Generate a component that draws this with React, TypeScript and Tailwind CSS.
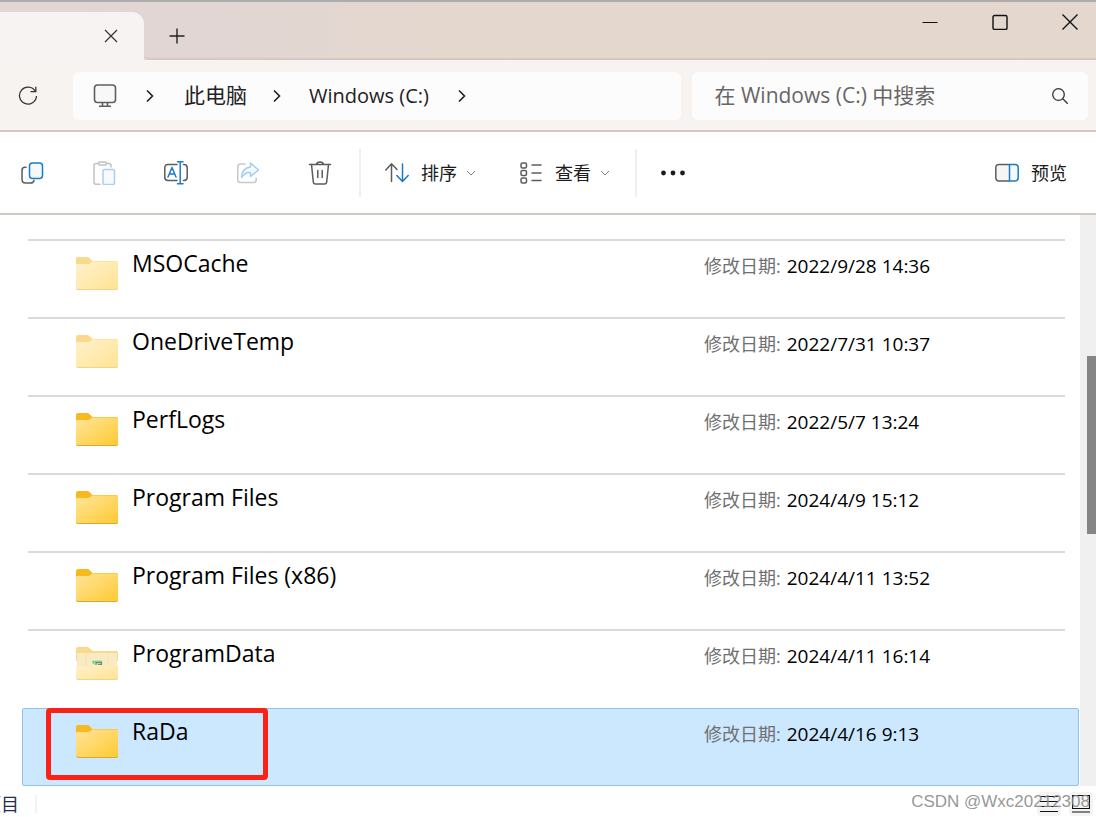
import type { ReactNode } from "react";
import { clsx } from "clsx";

type FolderKind = "hidden" | "normal" | "filled";

interface Entry {
    name: string;
    date: string;
    kind: FolderKind;
    selected?: boolean;
}

const entries: Entry[] = [
    { name: "MSOCache", date: "2022/9/28 14:36", kind: "hidden" },
    { name: "OneDriveTemp", date: "2022/7/31 10:37", kind: "hidden" },
    { name: "PerfLogs", date: "2022/5/7 13:24", kind: "normal" },
    { name: "Program Files", date: "2024/4/9 15:12", kind: "normal" },
    { name: "Program Files (x86)", date: "2024/4/11 13:52", kind: "normal" },
    { name: "ProgramData", date: "2024/4/11 16:14", kind: "filled" },
    { name: "RaDa", date: "2024/4/16 9:13", kind: "normal", selected: true },
];

const GRAY = "#5c5c5c";
const BLUE = "#1a7bc8";

const Folder = ({ kind }: { kind: FolderKind }) => {
    const pale = kind !== "normal";
    const id = `folder-${kind}`;
    return (
        <svg width="42" height="34" viewBox="0 0 42 34" className="shrink-0">
            <defs>
                <linearGradient id={id} x1="0" y1="0" x2="1" y2="1">
                    <stop offset="0" stopColor={pale ? "#fff1cc" : "#ffe59a"} />
                    <stop offset="1" stopColor={pale ? "#ffe394" : "#ffc930"} />
                </linearGradient>
            </defs>
            <path
                d="M0 2Q0 0 2 0H11Q12.500 0 13.500 1L16.500 4H40.500Q42 4 42 5.500V14H0Z"
                fill={pale ? "#fbd98c" : "#f7b91e"}
            />
            {kind === "filled" ? (
                <>
                    <path d="M1 6H41V20H1Z" fill="#f9eac4" />
                    <path d="M32 6V18M10 6V18" stroke="#f4e2b4" />
                    <path d="M17 13.500H26V19H17Z" fill="#d5e8c4" />
                    <path d="M16 14.500H26M17.500 14V17" fill="none" stroke="#7fd18a" strokeWidth="1.600" />
                    <path d="M20 18V15.700H25.500V18.500M22 17.500H25" fill="none" stroke="#6b8f6a" strokeWidth="1.200" />
                    <path
                        d="M0 20.500Q0 19.500 1.500 19.500H14L17 18H40.500Q42 18 42 19.500V31.500Q42 33 40.500 33H1.500Q0 33 0 31.500Z"
                        fill={`url(#${id})`}
                    />
                </>
            ) : (
                <path
                    d="M0 8.500Q0 7 1.500 7H12Q13.500 7 14.500 6L16 4.600H40.500Q42 4.600 42 6V31.500Q42 33 40.500 33H1.500Q0 33 0 31.500Z"
                    fill={`url(#${id})`}
                />
            )}
            <path
                d="M0.500 31.500Q1 32.500 2 32.500H40Q41 32.500 41.500 31.500"
                fill="none"
                stroke={pale ? "#efd48f" : "#dba63a"}
            />
        </svg>
    );
};

const Chevron = () => (
    <svg width="8" height="14" viewBox="0 0 8 14" fill="none" stroke="#1f1f1f" strokeWidth="1.600">
        <path d="M1 1.500L6.500 7L1 12.500" />
    </svg>
);

const SmallDown = () => (
    <svg width="10" height="6" viewBox="0 0 10 6" fill="none" stroke="#858585">
        <path d="M1 1L5 5L9 1" />
    </svg>
);

const Icon = ({ children }: { children: ReactNode }) => (
    <svg
        width="24"
        height="24"
        viewBox="0 0 24 24"
        fill="none"
        stroke={GRAY}
        strokeWidth="1.500"
        strokeLinecap="round"
        strokeLinejoin="round"
        className="shrink-0"
    >
        {children}
    </svg>
);

const CopyIcon = () => (
    <Icon>
        <path d="M6 6.300H5Q2 6.300 2 9.300V18.500Q2 22 5.500 22H10.500Q13.500 22 14 19.500" />
        <rect x="9.500" y="2" width="13" height="15.500" rx="3" fill="#f4f9fd" stroke={BLUE} />
    </Icon>
);

const PasteIcon = () => (
    <Icon>
        <g stroke="#c2c2c2">
            <path d="M6.500 2.500H4Q2 2.500 2 4.500V21.500Q2 23.300 4 23.300H8M14.500 2.500H17Q19 2.500 19 4.500V6" />
            <rect x="6.500" y="1" width="8" height="3" rx="1.500" />
        </g>
        <rect x="11" y="8.500" width="11.500" height="15" rx="1.500" fill="#f7fbff" stroke="#a9d0f0" />
    </Icon>
);

const RenameIcon = () => (
    <Icon>
        <path d="M13 3.500H4Q0.800 3.500 0.800 6.700V16.300Q0.800 19.500 4 19.500H13M19.500 3.500H20Q23.200 3.500 23.200 6.700V16.300Q23.200 19.500 20 19.500H19.500" />
        <g stroke={BLUE}>
            <path d="M4 16L8 6.500L12 16M5.500 13H10.500" />
            <path d="M16.200 0.800V22.800M13.500 0.800H19M13.500 22.800H19" />
        </g>
    </Icon>
);

const ShareIcon = () => (
    <Icon>
        <path
            d="M9 3H4.500Q1.800 3 1.800 5.700V18.800Q1.800 21.500 4.500 21.500H17.500Q20.200 21.500 20.200 18.800V17"
            stroke="#c8c8c8"
        />
        <path
            d="M14.500 2L22.500 9L14.500 15.500V11.500Q9 11 5.500 16.500Q6 7 14.500 6Z"
            fill="#f4faff"
            stroke="#a3cef2"
        />
    </Icon>
);

const DeleteIcon = () => (
    <Icon>
        <path d="M1.500 3.500H22.500M8.500 3.500Q8.800 1 12 1Q15.200 1 15.500 3.500" />
        <path d="M3.500 3.500L5.300 21Q5.500 23 7.500 23H16.500Q18.500 23 18.700 21L20.500 3.500" />
        <path d="M9.800 9.500V16.500M14.200 9.500V16.500" />
    </Icon>
);

const SortIcon = () => (
    <Icon>
        <path d="M6.500 20.500V3M0.800 9L6.500 2.800L12 8.500" />
        <path d="M17.500 3V20M11.800 14.500L17.500 20.500L23.200 14.500" stroke={BLUE} />
    </Icon>
);

const ViewIcon = () => (
    <Icon>
        <rect x="2" y="2" width="5.500" height="5" rx="1.500" />
        <rect x="2" y="9.500" width="5.500" height="5" rx="1.500" />
        <rect x="2" y="17" width="5.500" height="5" rx="1.500" />
        <path d="M13 4H22M13 12H22M13 19.500H22" />
    </Icon>
);

const PreviewIcon = () => (
    <Icon>
        <path d="M14 3.500H4Q0.800 3.500 0.800 6.700V16.300Q0.800 20 4 20H14" fill="#f5f5f5" />
        <path d="M14.500 3.500H20Q23.200 3.500 23.200 6.700V16.300Q23.200 20 20 20H14.500Z" fill="#f4f9fd" stroke={BLUE} />
    </Icon>
);

const TitleBar = () => (
    <header className="flex h-[60px] items-start border-t-2 border-[#adabac] bg-linear-to-r from-[#e1d6d3] from-20% to-[#e4d7ce] to-40%">
        <div className="mt-[10px] flex h-12 w-36 shrink-0 items-center justify-end rounded-tr-xl bg-[#f7f3f2] pr-6">
            <button type="button" aria-label="关闭标签页" className="flex size-[18px] items-center justify-center">
                <svg width="14" height="14" viewBox="0 0 14 14" stroke="#333" strokeWidth="1.200">
                    <path d="M1 1L13 13M13 1L1 13" />
                </svg>
            </button>
        </div>
        <div className="flex h-[58px] flex-1 items-start justify-between rounded-bl-md border-b-2 border-[#d6c9c2] pl-[25px]">
            <button type="button" aria-label="新建标签页" className="mt-[26px]">
                <svg width="16" height="16" viewBox="0 0 16 16" stroke="#222" strokeWidth="1.400">
                    <path d="M8 0.500V15.500M0.500 8H15.500" />
                </svg>
            </button>
            <div className="mt-3 flex gap-[54px] pr-[18px]">
                <button type="button" aria-label="最小化">
                    <svg width="16" height="16" viewBox="0 0 16 16" stroke="#111">
                        <path d="M0.500 8.500H15.500" />
                    </svg>
                </button>
                <button type="button" aria-label="最大化">
                    <svg width="16" height="16" viewBox="0 0 16 16" fill="none" stroke="#111" strokeWidth="1.400">
                        <rect x="1" y="1.500" width="14" height="14" rx="1.500" />
                    </svg>
                </button>
                <button type="button" aria-label="关闭">
                    <svg width="16" height="16" viewBox="0 0 16 16" stroke="#111" strokeWidth="1.400">
                        <path d="M0.500 0.500L15.500 15.500M15.500 0.500L0.500 15.500" />
                    </svg>
                </button>
            </div>
        </div>
    </header>
);

const AddressBar = () => (
    <div className="flex h-[72px] items-center border-b-2 border-[#d3c6bf] bg-[#f7f3f1] pt-0.5 pr-2">
        <button type="button" aria-label="刷新" className="flex w-[73px] shrink-0 pl-[18px]">
            <svg width="20" height="20" viewBox="0 0 20 20" fill="none" stroke="#333" strokeWidth="1.300">
                <path d="M17.300 5.200A8.500 8.500 0 1 0 18.500 10" />
                <path d="M12.500 5.700H17.800V0.800" />
            </svg>
        </button>
        <div className="grid flex-1 grid-cols-[20fr_13fr] gap-[11px]">
            <nav className="flex h-12 items-center rounded-md bg-[#fdfcfc] pl-5 text-xl text-[#222]">
                <svg width="24" height="24" viewBox="0 0 24 24" fill="none" stroke="#5f5f5f" strokeWidth="1.600">
                    <rect x="1.500" y="1" width="21" height="17.500" rx="3" fill="#f8f8f8" />
                    <path d="M9.500 18.500V22M14.500 18.500V22M6 22.200H18" />
                </svg>
                <span className="ml-[29px] mr-[30px]"><Chevron /></span>
                <a href="#pc" className="text-[21px]">此电脑</a>
                <span className="ml-[26px] mr-7"><Chevron /></span>
                <a href="#c">Windows (C:)</a>
                <span className="ml-[29px]"><Chevron /></span>
            </nav>
            <label className="flex h-12 items-center rounded-md bg-[#fdfcfc] pl-[22px] pr-5">
                <input
                    type="text"
                    aria-label="搜索"
                    placeholder="在 Windows (C:) 中搜索"
                    className="min-w-0 flex-1 bg-transparent text-[21px] outline-none placeholder:text-[#676767]"
                />
                <svg width="16" height="16" viewBox="0 0 16 16" fill="none" stroke="#333" strokeWidth="1.300">
                    <circle cx="6.500" cy="6.500" r="5.800" />
                    <path d="M10.800 10.800L15.800 15.800" />
                </svg>
            </label>
        </div>
    </div>
);

const Toolbar = () => (
    <div className="flex h-[83px] items-center border-b-2 border-[#d3c8c4] bg-white px-5 text-lg text-[#1c1c1c]">
        <div className="flex gap-12">
            <button type="button" aria-label="复制"><CopyIcon /></button>
            <button type="button" aria-label="粘贴" disabled><PasteIcon /></button>
            <button type="button" aria-label="重命名"><RenameIcon /></button>
            <button type="button" aria-label="共享" disabled><ShareIcon /></button>
            <button type="button" aria-label="删除"><DeleteIcon /></button>
        </div>
        <div className="ml-[27px] h-12 w-0.5 bg-[#efefef]"></div>
        <button type="button" className="ml-6 flex items-center">
            <SortIcon />
            <span className="ml-3 mr-[9px]">排序</span>
            <SmallDown />
        </button>
        <button type="button" className="ml-[43px] flex items-center">
            <ViewIcon />
            <span className="ml-3 mr-[9px]">查看</span>
            <SmallDown />
        </button>
        <div className="ml-[25px] h-12 w-0.5 bg-[#efefef]"></div>
        <button type="button" aria-label="更多" className="ml-[23px]">
            <svg width="26" height="6" viewBox="0 0 26 6" fill="#1c1c1c">
                <circle cx="3.500" cy="3" r="2.400" />
                <circle cx="13" cy="3" r="2.400" />
                <circle cx="22.500" cy="3" r="2.400" />
            </svg>
        </button>
        <button type="button" className="ml-auto mr-[9px] flex items-center gap-3">
            <PreviewIcon />
            <span>预览</span>
        </button>
    </div>
);

const Row = ({ name, date, kind, selected }: Entry) => (
    <li
        className={clsx(
            "flex h-[78px] items-start",
            selected
                ? "relative mt-px ml-[22px] mr-px rounded-xs border border-[#8fc3ea] bg-[#cce8ff] pl-[53px] pr-[13px]"
                : "ml-7 mr-[15px] border-t-2 border-[#dadada] pl-12",
        )}
    >
        <span className="pt-4"><Folder kind={kind} /></span>
        <span className="ml-3.5 flex-1 pt-1.5 text-[23px] leading-8 text-black">{name}</span>
        <span className="flex w-[361px] items-baseline gap-1.5 pt-[9px] text-[19px] leading-8 text-black">
            <span className="text-lg leading-8 text-[#707070]">修改日期:</span>
            <span>{date}</span>
        </span>
        {selected && (
            <div className="absolute -top-px left-[23px] h-[72px] w-[222px] rounded-sm border-5 border-[#fb2114]"></div>
        )}
    </li>
);

const StatusBar = () => (
    <footer className="relative flex h-[31px] items-center bg-white pt-1">
        <div className="flex w-[19px] justify-end overflow-hidden whitespace-nowrap text-lg leading-7 text-[#1e3050]">
            项目
        </div>
        <div className="ml-4 h-[18px] w-0.5 bg-[#f3f3f3]"></div>
        <div className="ml-auto mr-[3px] flex gap-2">
            <button type="button" aria-label="详细信息" className="flex size-6 items-center justify-center rounded-sm bg-[#f4f4f4]">
                <svg width="18" height="18" viewBox="0 0 18 18" stroke="#111" strokeWidth="1.200">
                    <path d="M0 1.500H18M0 6.500H18M0 11.500H18M0 16.500H18" />
                </svg>
            </button>
            <button type="button" aria-label="缩略图" className="flex size-6 items-center justify-center rounded-sm bg-[#f4f4f4]">
                <svg width="18" height="18" viewBox="0 0 18 18" fill="none" stroke="#111" strokeWidth="1.200">
                    <path d="M0.500 0.500H17.500V13.500H0.500ZM0 17H18" />
                </svg>
            </button>
        </div>
        <span className="absolute top-0 right-1.5 font-['Liberation_Sans',sans-serif] text-[17px] leading-[31px] text-[#8a8a8a]/90">
            CSDN @Wxc20212308
        </span>
    </footer>
);

export default function App() {
    return (
        <div className="bg-white font-['Open_Sans','Noto_Sans_CJK_SC',sans-serif]">
            <TitleBar />
            <AddressBar />
            <Toolbar />
            <main className="flex">
                <ul className="flex-1 pt-6">
                    {entries.map((entry) => (
                        <Row key={entry.name} {...entry} />
                    ))}
                </ul>
                <div className="w-4 shrink-0 bg-[#f0f0f0] pt-[141px]">
                    <div className="ml-auto h-[178px] w-[9px] bg-[#858585]"></div>
                </div>
            </main>
            <StatusBar />
        </div>
    );
}
